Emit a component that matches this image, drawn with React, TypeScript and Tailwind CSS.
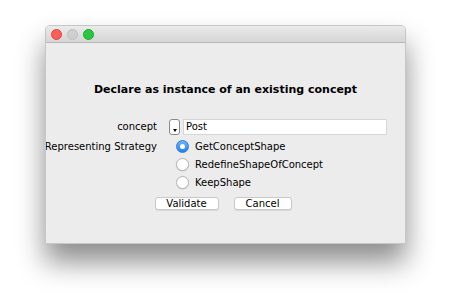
import React from "react";

const font = { fontFamily: '"DejaVu Sans", "Liberation Sans", sans-serif' };

function Radio({ checked, label }: { checked?: boolean; label: string }) {
  return (
    <div className="flex items-center h-[18px]">
      <div className="w-[26px] flex justify-center">
        {checked ? (
          <div className="w-[13px] h-[13px] rounded-full bg-gradient-to-b from-[#6cb3fa] to-[#1f7ff0] border border-[#2b7ae0] flex items-center justify-center">
            <div className="w-[5px] h-[5px] rounded-full bg-white" />
          </div>
        ) : (
          <div className="w-[13px] h-[13px] rounded-full bg-white border border-[#b5b5b5] shadow-[0_0.5px_1px_rgba(0,0,0,0.15)]" />
        )}
      </div>
      <span>{label}</span>
    </div>
  );
}

export default function App() {
  return (
    <div className="w-[450px] h-[308px] bg-white pt-[25px] pl-[45px]" style={font}>
      <div className="w-[361px] h-[219px] flex flex-col border border-[#c6c6c6] rounded-t-[5px] bg-[#ececec] shadow-[0_18px_28px_rgba(0,0,0,0.45)] text-[10px] text-black overflow-hidden">
        <div className="h-[17px] flex items-center gap-[5px] px-[5px] bg-gradient-to-b from-[#ebebeb] to-[#d5d5d5] border-b border-[#b8b8b8]">
          <div className="w-[11px] h-[11px] rounded-full bg-[#fc5f57] border border-[#e0443e]" />
          <div className="w-[11px] h-[11px] rounded-full bg-[#cfcfcf] border border-[#bcbcbc]" />
          <div className="w-[11px] h-[11px] rounded-full bg-[#2ac840] border border-[#1aab29]" />
        </div>
        <div className="flex-1 flex flex-col">
          <div className="mt-[40px] h-[14px] leading-[14px] text-center font-bold text-[11px]">Declare as instance of an existing concept</div>
          <div className="mt-[21px] flex">
            <div className="w-[111px] flex flex-col items-end whitespace-nowrap">
              <div className="h-[17px] flex items-center">concept</div>
              <div className="h-[22px] flex items-center">Representing Strategy</div>
            </div>
            <div className="flex flex-col ml-[12px]">
              <div className="flex items-center h-[17px]">
                <div className="w-[11px] h-[16px] rounded-[3px] border border-[#8a8a8a] bg-white flex items-end justify-center pb-[2px]">
                  <div className="w-0 h-0 border-l-[2px] border-r-[2px] border-t-[3px] border-l-transparent border-r-transparent border-t-black" />
                </div>
                <div className="ml-[3px] w-[204px] h-[16px] bg-white border border-[#d6d6d6] flex items-center pl-[2px]">Post</div>
              </div>
              <div className="mt-[2px] flex flex-col">
                <Radio checked label="GetConceptShape" />
                <Radio label="RedefineShapeOfConcept" />
                <Radio label="KeepShape" />
              </div>
            </div>
          </div>
          <div className="mt-[6px] flex justify-center gap-[15px] pr-[5px]">
            <button className="w-[64px] h-[13px] bg-white border border-[#c8c8c8] rounded-[3px] flex items-center justify-center leading-none shadow-[0_1px_0_rgba(0,0,0,0.08)]">Validate</button>
            <button className="w-[58px] h-[13px] bg-white border border-[#c8c8c8] rounded-[3px] flex items-center justify-center leading-none shadow-[0_1px_0_rgba(0,0,0,0.08)]">Cancel</button>
          </div>
        </div>
      </div>
    </div>
  );
}
